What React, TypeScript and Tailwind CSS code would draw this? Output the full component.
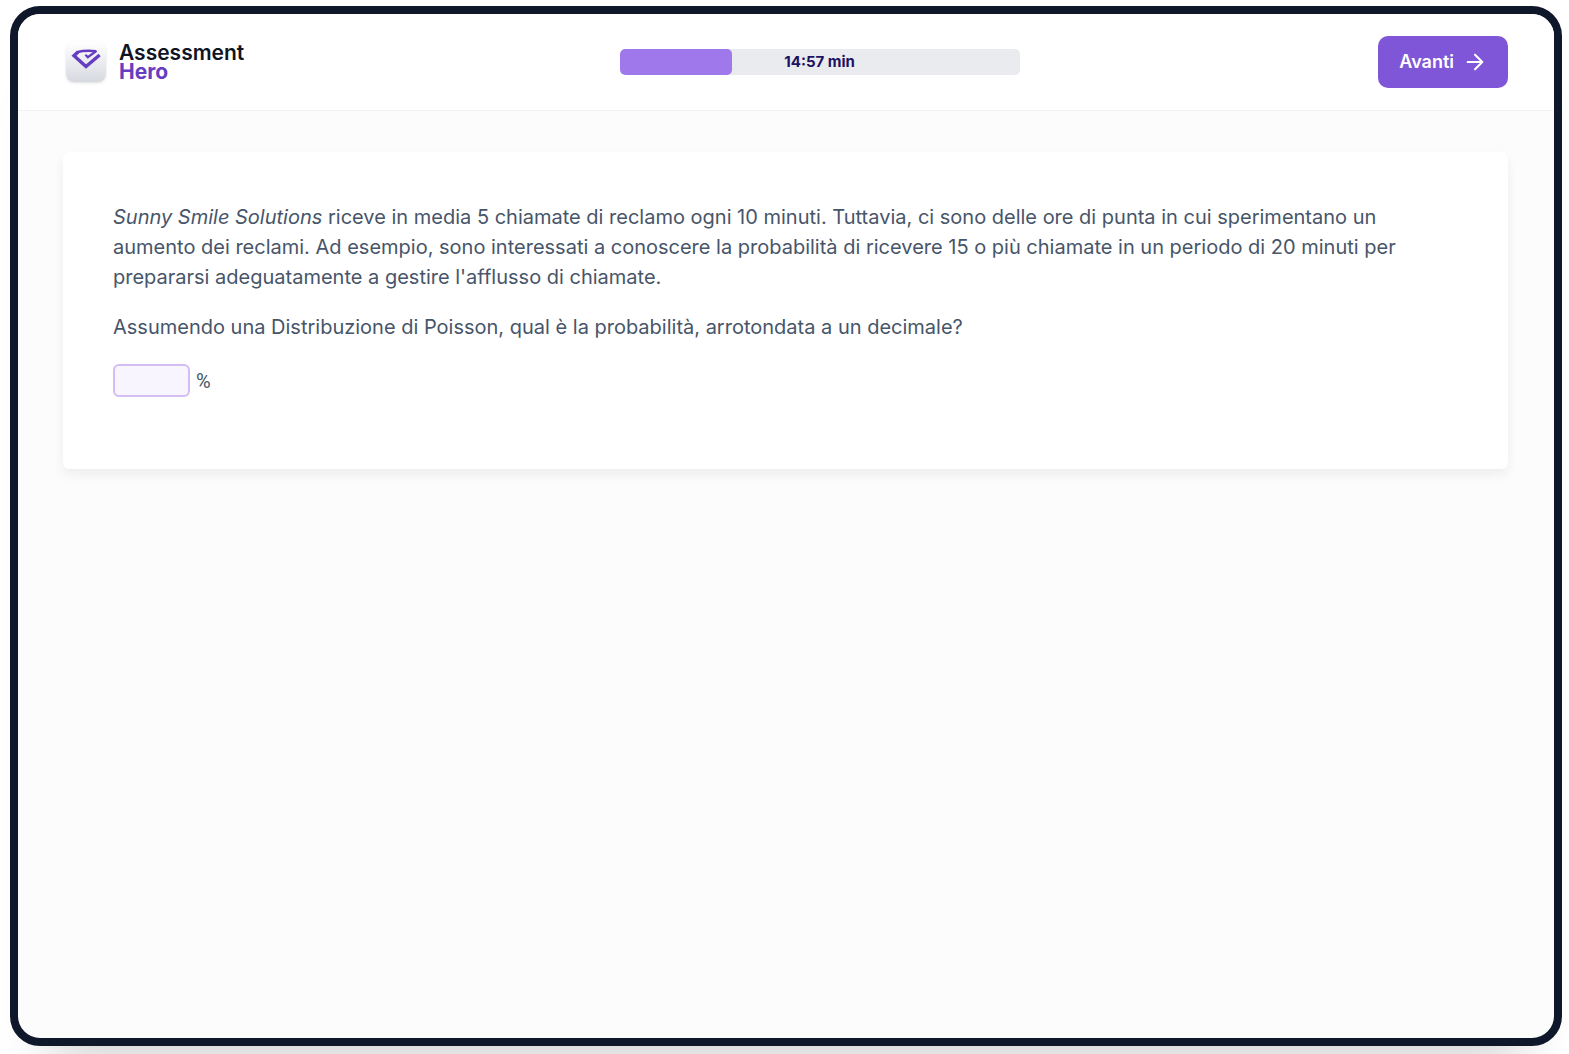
import { useState } from 'react';

function Logo() {
  return (
    <a href="/" className="flex w-[198px] items-center gap-[13px] pl-[3px]">
      <span className="flex h-10 w-10 justify-center rounded-lg bg-linear-to-b from-white to-[#d6d9e0] pt-[7px] shadow-sm">
        <svg className="h-5 w-[30px]" viewBox="0 0 30 20" fill="none" aria-hidden="true">
          <g stroke="#663dc0">
            <path d="M28.6 6L15 17.6L3 6.8L7 3" strokeWidth="3.4" />
            <path d="M5.6 3.2Q15 1 25 2.3" strokeWidth="2.6" />
            <path d="M25.6 1.8L16.8 8.2L14.4 5.8" strokeWidth="2.2" />
          </g>
        </svg>
      </span>
      <span className="flex flex-col text-[21px] leading-[19px]">
        <span className="font-semibold text-[#0f1425]">Assessment</span>
        <span className="font-bold text-[#663dc0]">Hero</span>
      </span>
    </a>
  );
}

function TimeBar({ label, percent }: { label: string; percent: number }) {
  return (
    <div
      role="timer"
      className="relative h-[26px] w-[400px] overflow-hidden rounded-[5px] bg-[#e9ebee]"
    >
      <div className="h-full rounded-[5px] bg-[#9f78ec]" style={{ width: `${percent}%` }} />
      <span className="absolute inset-0 flex items-center justify-center text-[15px] font-bold text-[#1e1160]">
        {label}
      </span>
    </div>
  );
}

export default function App() {
  const [answer, setAnswer] = useState('');

  return (
    <div className="flex min-h-screen overflow-hidden bg-white pt-[6px] pr-[7px] pb-2 pl-[10px] font-['Inter',sans-serif]">
      <div className="flex flex-1 flex-col overflow-hidden rounded-[30px] border-8 border-[#0f172a] bg-[#fcfcfd] shadow-[0_50px_50px_-40px_rgba(0,0,0,0.2)]">
        <header className="flex h-[97px] items-center justify-between border-b border-[#f0f1f3] bg-white pr-[46px] pl-[45px]">
          <Logo />
          <TimeBar label="14:57 min" percent={28} />
          <button
            type="button"
            className="flex h-[52px] items-center gap-[10px] rounded-[10px] bg-[#8056d8] pr-[22px] pl-[21px] text-lg font-semibold text-white"
          >
            Avanti
            <svg
              className="h-[22px] w-[22px]"
              viewBox="0 0 24 24"
              fill="none"
              stroke="currentColor"
              strokeWidth="2.2"
              strokeLinecap="round"
              strokeLinejoin="round"
              aria-hidden="true"
            >
              <path d="M4 12h16M12 4l8 8-8 8" />
            </svg>
          </button>
        </header>

        <main className="flex-1 pt-[41px] pr-[46px] pl-[45px]">
          <section className="rounded-md bg-white px-[50px] pt-[50px] pb-[72px] text-xl leading-[30px] text-[#475569] shadow-[0_6px_12px_rgba(0,0,0,0.06)]">
            <p>
              <em>Sunny Smile Solutions</em> riceve in media 5 chiamate di reclamo ogni 10 minuti.
              Tuttavia, ci sono delle ore di punta in cui sperimentano un aumento dei reclami. Ad
              esempio, sono interessati a conoscere la probabilità di ricevere 15 o più chiamate in
              un periodo di 20 minuti per prepararsi adeguatamente a gestire l'afflusso di chiamate.
            </p>
            <p className="mt-5">
              Assumendo una Distribuzione di Poisson, qual è la probabilità, arrotondata a un
              decimale?
            </p>
            <div className="mt-[22px] flex items-center gap-[6px]">
              <input
                id="answer"
                type="text"
                inputMode="decimal"
                value={answer}
                onChange={(e) => setAnswer(e.target.value)}
                className="h-[33px] w-[77px] rounded-md border-2 border-[#d3bdf3] bg-[#f9f5ff] px-2 text-lg outline-none"
              />
              <label htmlFor="answer" className="font-[Roboto,sans-serif]">
                %
              </label>
            </div>
          </section>
        </main>
      </div>
    </div>
  );
}
